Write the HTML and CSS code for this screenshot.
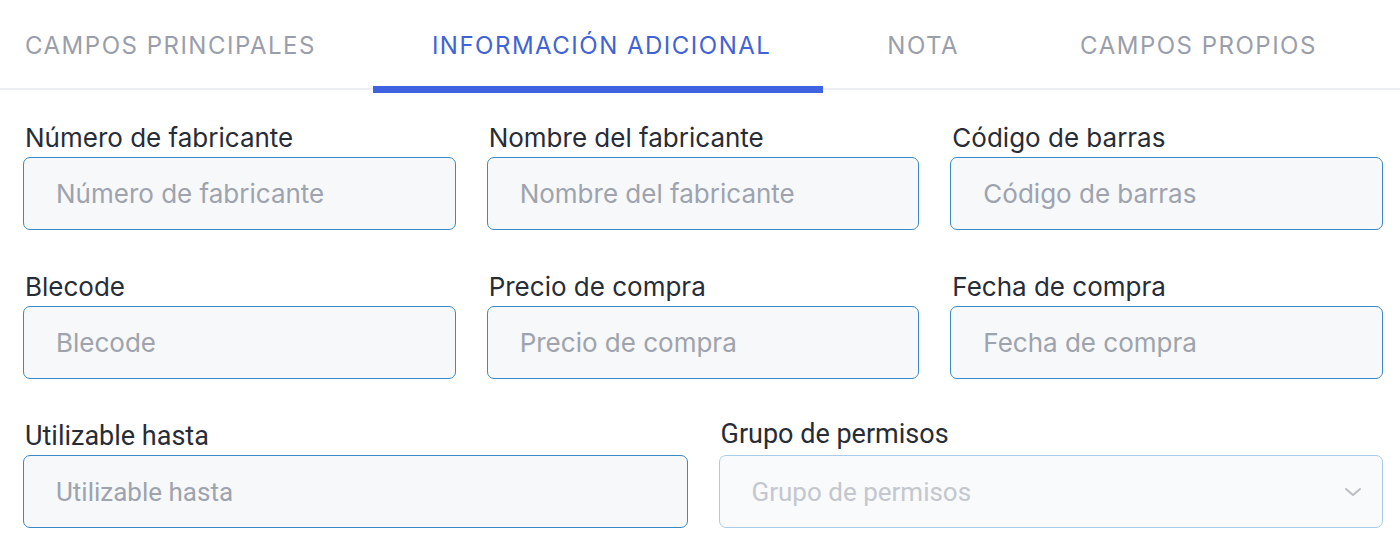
FILE: index.html
```html
<!DOCTYPE html>
<html lang="es">
<head>
    <meta charset="UTF-8">
    <meta name="viewport" content="width=device-width, initial-scale=1.0">
    <title>Información adicional</title>
    <link rel="stylesheet" href="styles.css">
</head>
<body>
    <nav class="tabs">
        <a class="tab">Campos principales</a>
        <a class="tab active">Información adicional</a>
        <a class="tab">Nota</a>
        <a class="tab">Campos propios</a>
    </nav>

    <main class="form">
        <div class="row row-3">
            <div class="field">
                <label>Número de fabricante</label>
                <input type="text" class="text-input" placeholder="Número de fabricante">
            </div>
            <div class="field">
                <label>Nombre del fabricante</label>
                <input type="text" class="text-input" placeholder="Nombre del fabricante">
            </div>
            <div class="field">
                <label>Código de barras</label>
                <input type="text" class="text-input" placeholder="Código de barras">
            </div>
        </div>

        <div class="row row-3">
            <div class="field">
                <label>Blecode</label>
                <input type="text" class="text-input" placeholder="Blecode">
            </div>
            <div class="field">
                <label>Precio de compra</label>
                <input type="text" class="text-input" placeholder="Precio de compra">
            </div>
            <div class="field">
                <label>Fecha de compra</label>
                <input type="text" class="text-input" placeholder="Fecha de compra">
            </div>
        </div>

        <div class="row row-2">
            <div class="field">
                <label>Utilizable hasta</label>
                <input type="text" class="text-input" placeholder="Utilizable hasta">
            </div>
            <div class="field">
                <label class="label-up">Grupo de permisos</label>
                <div class="select">
                    <span>Grupo de permisos</span>
                    <svg width="18" height="12" viewBox="0 0 18 12">
                        <path d="M2 3 L9 9 L16 3" fill="none" stroke="#b9bdc4" stroke-width="2" stroke-linecap="round" stroke-linejoin="round"/>
                    </svg>
                </div>
            </div>
        </div>
    </main>
</body>
</html>
```

FILE: styles.css
```css
body {
    font-family: Inter, 'Noto Sans', sans-serif;
    margin: 0;
    padding: 0;
    background-color: #fff;
    overflow: hidden;
}

.tabs {
    display: flex;
    height: 88px;
    border-bottom: 2px solid #eceef2;
    margin-left: -33px;
}

.tab {
    display: flex;
    align-items: center;
    padding: 3px 58px 0;
    font-size: 24px;
    letter-spacing: 1.5px;
    text-transform: uppercase;
    color: #9a9eab;
    position: relative;
}

.tab:last-child {
    margin-left: 5px;
}

.tab.active {
    color: #4163d6;
}

.tab.active::after {
    content: "";
    position: absolute;
    left: -1px;
    right: 6px;
    bottom: -5px;
    height: 7px;
    background-color: #3f63e0;
}

.form {
    padding: 31px 17px 0 23px;
    display: flex;
    flex-direction: column;
    gap: 40px;
}

.row {
    display: grid;
    column-gap: 31px;
}

.row-3 {
    grid-template-columns: repeat(3, 1fr);
}

.row-2 {
    grid-template-columns: repeat(2, 1fr);
}

.field {
    display: flex;
    flex-direction: column;
    gap: 4px;
}

.field label {
    font-size: 26px;
    line-height: 30px;
    padding-top: 2px;
    color: #272c37;
    padding-left: 2px;
}

.field .label-up {
    margin-top: -2px;
    margin-bottom: 2px;
}

.text-input,
.select {
    height: 73px;
    box-sizing: border-box;
    border: 1.5px solid #3b89c5;
    border-radius: 7px;
    background-color: #f6f8fa;
    padding: 0 32px;
    font-family: Inter, 'Noto Sans', sans-serif;
    font-size: 26px;
    color: #272c37;
    outline: none;
    width: 100%;
}

.text-input::placeholder {
    color: #9ea3ad;
}

.row-2 label,
.row-2 .text-input,
.row-2 .select {
    font-family: Roboto, 'Noto Sans', sans-serif;
    font-size: 26px;
}

.row-2 label {
    font-size: 27px;
}

.select {
    display: flex;
    align-items: center;
    justify-content: space-between;
    border-color: #a9cde8;
    background-color: #f8fafc;
    padding-right: 20px;
    color: #c4c7cd;
}
```
